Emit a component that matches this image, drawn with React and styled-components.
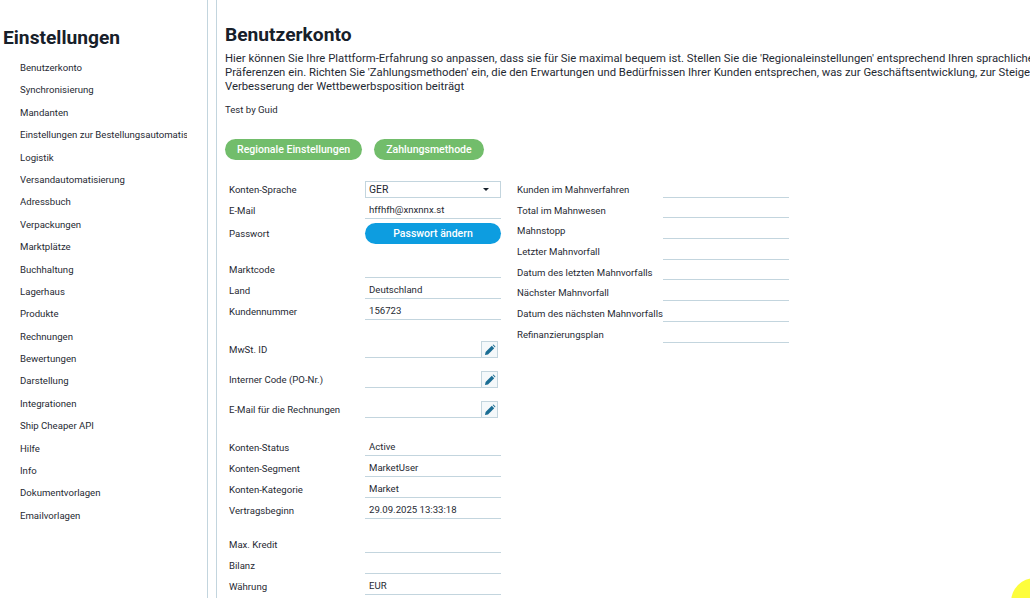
import styled, { createGlobalStyle } from "styled-components";

const GlobalStyle = createGlobalStyle`
	html, body {
		margin: 0;
		height: 100%;
		overflow: hidden;
		background: #fff;
	}
	body {
		font-family: Roboto, "Liberation Sans", sans-serif;
		color: #1f2a33;
	}
`;

const border_blue = "#c3d5de";

// Root
const PageWrapper = styled.div`
	display: flex;
	height: 598px;
	width: 1030px;
	overflow: hidden;
`;

// Left menu
const Sidebar = styled.aside`
	width: 207px;
	flex-shrink: 0;
	border-right: 1px solid ${border_blue};
	padding-top: 27px;
`;
const SideTitle = styled.h2`
	margin: 0 0 8px 3px;
	font-size: 19.2px;
	line-height: 22px;
	font-weight: 700;
	color: #17202a;
`;
const MenuList = styled.ul`
	list-style: none;
	margin: 0;
	padding: 0 0 0 20px;
`;
const MenuItem = styled.li`
	width: 167px;
	height: 22.4px;
	line-height: 22.4px;
	font-size: 9.6px;
	white-space: nowrap;
	overflow: hidden;
`;

// Thin strip between menu and content
const Divider = styled.div`
	width: 8px;
	flex-shrink: 0;
	border-right: 1px solid ${border_blue};
`;

// Main content
const Content = styled.main`
	flex: 1;
	min-width: 0;
	padding: 24px 0 0 8px;
`;
const Title = styled.h1`
	margin: 0 0 6px;
	font-size: 19.2px;
	line-height: 22px;
	font-weight: 700;
	color: #17202a;
`;
const Intro = styled.p`
	margin: 0 0 9px;
	white-space: nowrap;
	font-size: 11.3px;
	line-height: 14px;
`;
const Note = styled.p`
	margin: 0 0 22px;
	font-size: 9.6px;
	line-height: 14px;
`;
const Tabs = styled.div`
	display: flex;
	gap: 12px;
	margin-bottom: 17px;
`;
const TabButton = styled.button`
	height: 21px;
	padding: 0 12px;
	border: none;
	border-radius: 11px;
	background: #72bd6b;
	color: #fff;
	font-family: inherit;
	font-size: 10.56px;
	font-weight: 500;
`;

const Columns = styled.div`
	display: flex;
	gap: 16px;
	padding-left: 4px;
`;
const LeftColumn = styled.div`
	width: 272px;
	padding-top: 4px;
`;
const RightColumn = styled.div`
	width: 272px;
`;
const FieldGroup = styled.div`
	margin-top: ${(p) => p.$gap || 0}px;
`;
const Row = styled.div`
	display: flex;
	align-items: center;
	height: ${(p) => p.$height || 21}px;
	font-size: 9.6px;
`;
const Label = styled.div`
	width: 136px;
	flex-shrink: 0;
	white-space: nowrap;
	padding-top: ${(p) => p.$drop || 0}px;
`;
const Value = styled.div`
	width: 136px;
	height: 100%;
	box-sizing: border-box;
	border-bottom: 1px solid ${border_blue};
	padding: 4px 0 0 4px;
	line-height: 16px;
`;
const SelectBox = styled.div`
	width: 136px;
	height: 17px;
	box-sizing: border-box;
	border: 1px solid ${border_blue};
	padding: 0 3px;
	display: flex;
	align-items: center;
	justify-content: space-between;
	font-size: 10.4px;
`;
const Caret = styled.span`
	width: 0;
	height: 0;
	margin-right: 8px;
	border-left: 3px solid transparent;
	border-right: 3px solid transparent;
	border-top: 3px solid #17202a;
`;
const BlueButton = styled.button`
	width: 136px;
	height: 21px;
	border: none;
	border-radius: 11px;
	background: #0d9de0;
	color: #fff;
	font-family: inherit;
	font-size: 10.5px;
	font-weight: 500;
`;
const EditCell = styled.div`
	display: flex;
	align-items: flex-end;
	height: 100%;
`;
const EditLine = styled.div`
	width: 116px;
	border-bottom: 1px solid ${border_blue};
`;
const EditButton = styled.button`
	width: 17px;
	height: 17px;
	padding: 0;
	display: flex;
	align-items: center;
	justify-content: center;
	border: 1px solid ${border_blue};
	background: #f4f8fa;
`;
const MahnRow = styled.div`
	display: flex;
	align-items: center;
	height: 20.7px;
	font-size: 9.6px;
`;
const MahnLabel = styled.div`
	width: 146px;
	flex-shrink: 0;
	white-space: nowrap;
	padding-top: 4px;
`;
const MahnValue = styled.div`
	width: 126px;
	height: 100%;
	box-sizing: border-box;
	border-bottom: 1px solid ${border_blue};
`;

// Yellow blob in the corner
const Blob = styled.div`
	position: fixed;
	left: 1011px;
	top: 578px;
	width: 48px;
	height: 48px;
	border-radius: 50%;
	background: #fdfd3c;
`;

const PencilIcon = () => (
	<svg width="12" height="12" viewBox="0 0 12 12">
		<path d="M1 11 L1.6 8 L7.8 1.8 L10.2 4.2 L4 10.4 Z" fill="#1a6d94" />
		<path d="M8.6 1 L9.4 0.6 L11.4 2.6 L11 3.4 Z" fill="#1a6d94" />
	</svg>
);

const menu = [
	"Benutzerkonto",
	"Synchronisierung",
	"Mandanten",
	"Einstellungen zur Bestellungsautomatisierung",
	"Logistik",
	"Versandautomatisierung",
	"Adressbuch",
	"Verpackungen",
	"Marktplätze",
	"Buchhaltung",
	"Lagerhaus",
	"Produkte",
	"Rechnungen",
	"Bewertungen",
	"Darstellung",
	"Integrationen",
	"Ship Cheaper API",
	"Hilfe",
	"Info",
	"Dokumentvorlagen",
	"Emailvorlagen",
];

const mahnwesen = [
	"Kunden im Mahnverfahren",
	"Total im Mahnwesen",
	"Mahnstopp",
	"Letzter Mahnvorfall",
	"Datum des letzten Mahnvorfalls",
	"Nächster Mahnvorfall",
	"Datum des nächsten Mahnvorfalls",
	"Refinanzierungsplan",
];

const Field = ({ label, value }) => (
	<Row>
		<Label $drop={4}>{label}</Label>
		<Value>{value}</Value>
	</Row>
);

const EditField = ({ label }) => (
	<Row $height={30}>
		<Label $drop={12}>{label}</Label>
		<EditCell>
			<EditLine />
			<EditButton>
				<PencilIcon />
			</EditButton>
		</EditCell>
	</Row>
);

const App = () => {
	return (
		<PageWrapper>
			<GlobalStyle />
			<Sidebar>
				<SideTitle>Einstellungen</SideTitle>
				<MenuList>
					{menu.map((item) => (
						<MenuItem key={item}>{item}</MenuItem>
					))}
				</MenuList>
			</Sidebar>
			<Divider />
			<Content>
				<Title>Benutzerkonto</Title>
				<Intro>
					Hier können Sie Ihre Plattform-Erfahrung so anpassen, dass sie für Sie maximal bequem ist. Stellen Sie die
					'Regionaleinstellungen' entsprechend Ihren sprachlichen und regionalen
					<br />
					Präferenzen ein. Richten Sie 'Zahlungsmethoden' ein, die den Erwartungen und Bedürfnissen Ihrer Kunden
					entsprechen, was zur Geschäftsentwicklung, zur Steigerung der Verkäufe und zur
					<br />
					Verbesserung der Wettbewerbsposition beiträgt
				</Intro>
				<Note>Test by Guid</Note>
				<Tabs>
					<TabButton>Regionale Einstellungen</TabButton>
					<TabButton>Zahlungsmethode</TabButton>
				</Tabs>
				<Columns>
					<LeftColumn>
						<FieldGroup>
							<Row $height={17}>
								<Label>Konten-Sprache</Label>
								<SelectBox>
									GER
									<Caret />
								</SelectBox>
							</Row>
							<Field label="E-Mail" value="hffhfh@xnxnnx.st" />
							<Row $height={29}>
								<Label>Passwort</Label>
								<BlueButton>Passwort ändern</BlueButton>
							</Row>
						</FieldGroup>
						<FieldGroup $gap={9}>
							<Field label="Marktcode" />
							<Field label="Land" value="Deutschland" />
							<Field label="Kundennummer" value="156723" />
						</FieldGroup>
						<FieldGroup $gap={8}>
							<EditField label="MwSt. ID" />
							<EditField label="Interner Code (PO-Nr.)" />
							<EditField label="E-Mail für die Rechnungen" />
						</FieldGroup>
						<FieldGroup $gap={17}>
							<Field label="Konten-Status" value="Active" />
							<Field label="Konten-Segment" value="MarketUser" />
							<Field label="Konten-Kategorie" value="Market" />
							<Field label="Vertragsbeginn" value="29.09.2025 13:33:18" />
						</FieldGroup>
						<FieldGroup $gap={13}>
							<Field label="Max. Kredit" />
							<Field label="Bilanz" />
							<Field label="Währung" value="EUR" />
						</FieldGroup>
					</LeftColumn>
					<RightColumn>
						{mahnwesen.map((item) => (
							<MahnRow key={item}>
								<MahnLabel>{item}</MahnLabel>
								<MahnValue />
							</MahnRow>
						))}
					</RightColumn>
				</Columns>
			</Content>
			<Blob />
		</PageWrapper>
	);
};

export default App;
